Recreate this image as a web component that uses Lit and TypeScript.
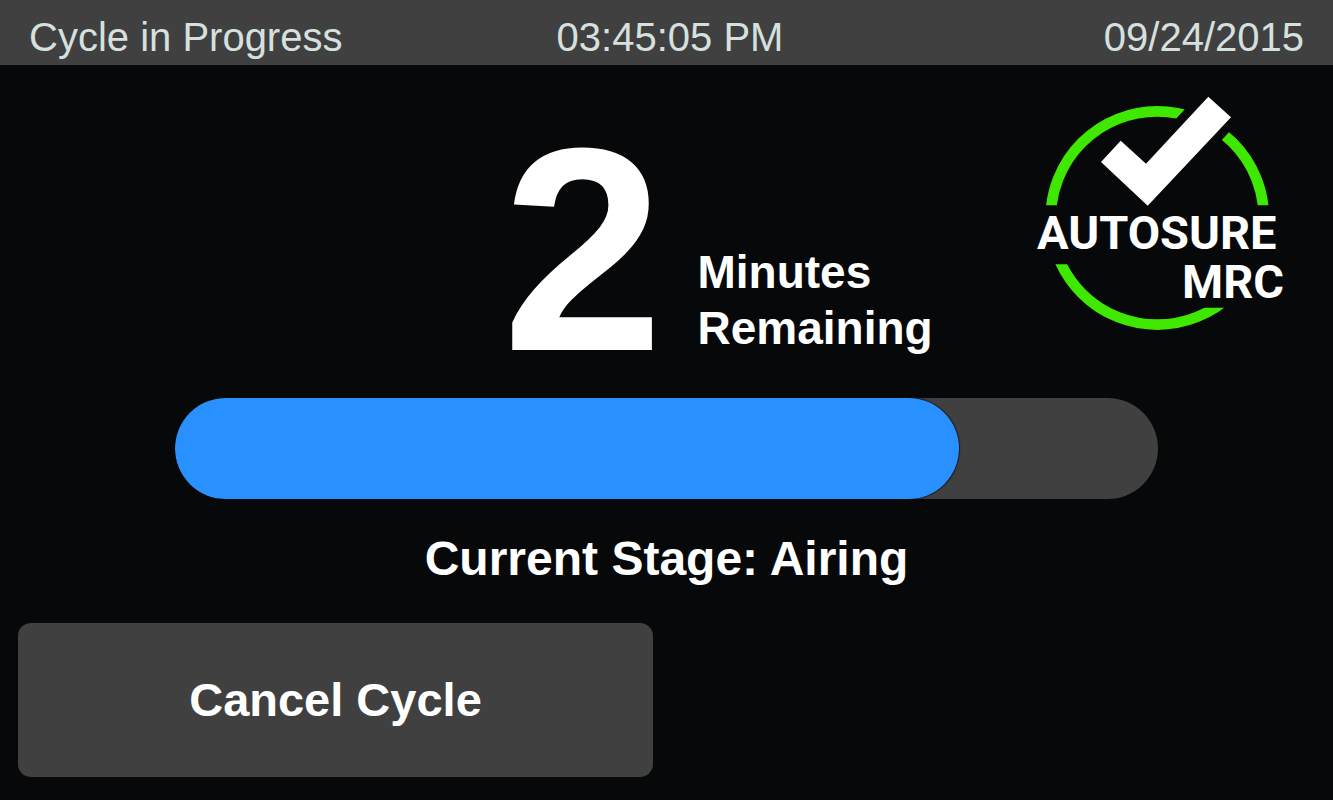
import { LitElement, html, css } from "lit";
import { customElement, property } from "lit/decorators.js";

@customElement("autosure-logo")
export class AutosureLogo extends LitElement {
  static styles = css`
    :host {
      display: block;
      flex: none;
      width: 248px;
    }
    .logo {
      display: block;
      width: 100%;
      overflow: visible;
    }
    .ring {
      fill: none;
      stroke: #3fe800;
      stroke-width: 10.6;
    }
    .mark {
      fill: #fff;
    }
    .name {
      fill: #fff;
      font-family: Roboto, "Liberation Sans", sans-serif;
      font-weight: 700;
      font-size: 47px;
    }
  `;

  render() {
    return html`
      <svg class="logo" viewBox="0 0 248 235" role="img" aria-label="Autosure MRC">
        <defs>
          <clipPath id="arcs">
            <path d="M-5 0H160.9L85 83V109.3H-5Z" />
            <path d="M226 0L150 83.3V109.3H250V0Z" />
            <path d="M-5 168.3H140V211.7H250V240H-5Z" />
          </clipPath>
        </defs>
        <g clip-path="url(#arcs)">
          <circle class="ring" cx="121.3" cy="122" r="106.6" />
        </g>
        <path class="mark" d="M172.3 .7L195 21.3L111.7 109.7L65 66L84.7 44.7L110 67.7Z" />
        <text class="name" x="1" y="153">AUTOSURE</text>
        <text class="name" x="248" y="202" text-anchor="end">MRC</text>
      </svg>
    `;
  }
}

@customElement("cycle-progress")
export class CycleProgress extends LitElement {
  @property({ type: Number }) value = 0;

  static styles = css`
    :host {
      display: block;
    }
    .track {
      height: 101px;
      border-radius: 51px;
      background: #404040;
      overflow: hidden;
    }
    .fill {
      height: 100%;
      border-radius: 51px;
      background: #2890ff;
      box-shadow: 0 0 1px 1px #181c22;
    }
  `;

  render() {
    return html`
      <div
        class="track"
        role="progressbar"
        aria-label="Cycle progress"
        aria-valuemin="0"
        aria-valuemax="100"
        aria-valuenow=${this.value}
      >
        <div class="fill" style="width: ${this.value}%"></div>
      </div>
    `;
  }
}

@customElement("app-root")
export class AppRoot extends LitElement {
  @property({ type: Number }) minutes = 2;
  @property() stage = "Airing";
  @property({ type: Number }) progress = 79.8;

  static styles = css`
    :host {
      display: flex;
      flex-direction: column;
      min-height: 100vh;
      box-sizing: border-box;
      background: #060809;
      color: #fff;
      font-family: "Liberation Sans", Arial, sans-serif;
    }
    .status {
      display: grid;
      grid-template-columns: 12fr 9fr 8fr;
      align-items: center;
      min-height: 65px;
      box-sizing: border-box;
      padding: 8px 29px 0;
      background: #404040;
      color: #d6e0df;
      font-size: 40px;
      line-height: 56px;
      white-space: nowrap;
    }
    .title {
      margin: 0;
      font-size: inherit;
      font-weight: 400;
    }
    .date {
      justify-self: end;
    }
    main {
      flex: 1;
      display: flex;
      flex-direction: column;
    }
    .remaining {
      display: grid;
      grid-template-columns: 1fr 1fr;
      gap: 6px;
      min-height: 260px;
      padding: 31px 0 42px;
    }
    .minutes {
      align-self: end;
      justify-self: end;
      font-size: 290px;
      line-height: 214px;
      font-weight: 700;
    }
    .side {
      display: flex;
      justify-content: space-between;
      padding: 0 49px 0 28px;
    }
    .unit {
      align-self: flex-end;
      font-size: 46px;
      line-height: 56px;
      font-weight: 700;
    }
    .unit span {
      display: block;
    }
    .bar {
      width: 74%;
      max-width: 983px;
      margin: 0 auto;
    }
    .stage {
      margin: 32px 0 0;
      text-align: center;
      font-size: 48px;
      line-height: 56px;
      font-weight: 700;
    }
    .actions {
      display: grid;
      grid-template-columns: 1fr 1fr;
      gap: 27px;
      margin-top: auto;
      padding: 23px 18px;
    }
    .cancel {
      min-height: 154px;
      padding: 0 18px;
      border: 0;
      border-radius: 13px;
      background: #404040;
      color: #fff;
      font: 700 47px/56px "Liberation Sans", Arial, sans-serif;
      cursor: pointer;
    }
  `;

  render() {
    return html`
      <header class="status">
        <h1 class="title">Cycle in Progress</h1>
        <time datetime="15:45:05">03:45:05 PM</time>
        <time class="date" datetime="2015-09-24">09/24/2015</time>
      </header>
      <main>
        <section class="remaining">
          <div class="minutes">${this.minutes}</div>
          <div class="side">
            <div class="unit"><span>Minutes</span><span>Remaining</span></div>
            <autosure-logo></autosure-logo>
          </div>
        </section>
        <cycle-progress class="bar" .value=${this.progress}></cycle-progress>
        <p class="stage">Current Stage: ${this.stage}</p>
        <div class="actions">
          <button class="cancel" type="button">Cancel Cycle</button>
        </div>
      </main>
    `;
  }
}
